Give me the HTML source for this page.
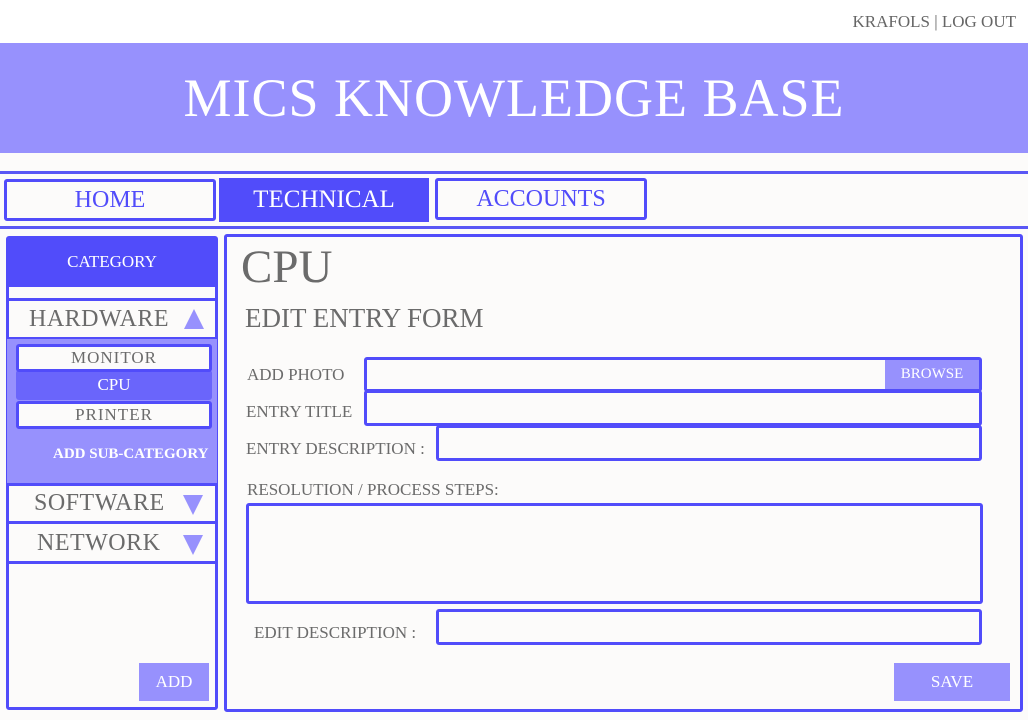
<!DOCTYPE html>
<html><head><meta charset="utf-8"><style>
*{box-sizing:border-box;margin:0;padding:0}
body{width:1028px;height:720px;background:#fcfbfa;font-family:"Liberation Serif",serif;color:#6b6b6b;position:relative;overflow:hidden}
.a{position:absolute}
.b{border:3px solid #514cfa;border-radius:3px;background:#fcfbfa}
.c{display:flex;align-items:center;justify-content:center}
.tri{width:0;height:0;border-left:10px solid transparent;border-right:10px solid transparent}
</style></head><body>
<div class="a" style="left:0;top:0;width:1028px;height:43px;background:#fff"></div>
<div class="a" style="right:12px;top:12px;font-size:17px;color:#666">KRAFOLS | LOG OUT</div>
<div class="a c" style="left:0;top:43px;width:1028px;height:110px;background:#9791fd;color:#fff;font-size:54px;letter-spacing:1px">MICS KNOWLEDGE BASE</div>
<div class="a" style="left:0;top:171px;width:1028px;height:3px;background:#5a57f5"></div>
<div class="a" style="left:0;top:226px;width:1028px;height:3px;background:#5a57f5"></div>
<div class="a b c" style="left:4px;top:179px;width:212px;height:42px;color:#514cfa;font-size:24px">HOME</div>
<div class="a c" style="left:219px;top:178px;width:210px;height:44px;background:#514cfa;color:#fff;font-size:25px">TECHNICAL</div>
<div class="a b c" style="left:435px;top:178px;width:212px;height:42px;color:#514cfa;font-size:24px">ACCOUNTS</div>

<div class="a b" style="left:6px;top:236px;width:212px;height:474px"></div>
<div class="a c" style="left:7px;top:237px;width:210px;height:50px;background:#514cfa;color:#fff;font-size:17px">CATEGORY</div>
<div class="a" style="left:7px;top:298px;width:210px;height:3px;background:#514cfa"></div>
<div class="a" style="left:29px;top:306px;font-size:24px;letter-spacing:0.5px">HARDWARE</div>
<div class="a tri" style="left:184px;top:309px;border-bottom:20px solid #9791fd"></div>
<div class="a" style="left:7px;top:337px;width:210px;height:149px;background:#9791fd;border-top:2px solid #514cfa;border-bottom:3px solid #514cfa"></div>
<div class="a" style="left:16px;top:370px;width:196px;height:30px;background:#6a65fb;border-radius:3px"></div>
<div class="a c" style="left:16px;top:370px;width:196px;height:30px;color:#fff;font-size:17px">CPU</div>
<div class="a b c" style="left:16px;top:344px;width:196px;height:28px;font-size:17px;letter-spacing:1px">MONITOR</div>
<div class="a b c" style="left:16px;top:401px;width:196px;height:28px;font-size:17px;letter-spacing:1px">PRINTER</div>
<div class="a" style="left:53px;top:446px;color:#fff;font-size:15px;font-weight:bold">ADD SUB-CATEGORY</div>
<div class="a" style="left:34px;top:490px;font-size:24px;letter-spacing:0.5px">SOFTWARE</div>
<div class="a tri" style="left:183px;top:495px;border-top:20px solid #9791fd"></div>
<div class="a" style="left:7px;top:521px;width:210px;height:3px;background:#514cfa"></div>
<div class="a" style="left:37px;top:530px;font-size:24px;letter-spacing:0.5px">NETWORK</div>
<div class="a tri" style="left:183px;top:535px;border-top:20px solid #9791fd"></div>
<div class="a" style="left:7px;top:561px;width:210px;height:3px;background:#514cfa"></div>
<div class="a c" style="left:139px;top:663px;width:70px;height:38px;background:#9791fd;color:#fff;font-size:17px">ADD</div>

<div class="a b" style="left:224px;top:234px;width:799px;height:478px"></div>
<div class="a" style="left:241px;top:240px;font-size:47px;color:#6b6b6b">CPU</div>
<div class="a" style="left:245px;top:303px;font-size:27px">EDIT ENTRY FORM</div>
<div class="a" style="left:247px;top:365px;font-size:17px">ADD PHOTO</div>
<div class="a" style="left:246px;top:402px;font-size:17px">ENTRY TITLE</div>
<div class="a" style="left:246px;top:439px;font-size:17px">ENTRY DESCRIPTION :</div>
<div class="a" style="left:247px;top:480px;font-size:17px">RESOLUTION / PROCESS STEPS:</div>
<div class="a" style="left:254px;top:623px;font-size:17px">EDIT DESCRIPTION :</div>
<div class="a b" style="left:364px;top:357px;width:618px;height:35px"></div>
<div class="a c" style="left:885px;top:360px;width:94px;height:29px;background:#9791fd;color:#fff;font-size:15px">BROWSE</div>
<div class="a b" style="left:364px;top:390px;width:618px;height:36px"></div>
<div class="a b" style="left:436px;top:425px;width:546px;height:36px"></div>
<div class="a b" style="left:246px;top:503px;width:737px;height:101px"></div>
<div class="a b" style="left:436px;top:609px;width:546px;height:36px"></div>
<div class="a c" style="left:894px;top:663px;width:116px;height:38px;background:#9791fd;color:#fff;font-size:17px">SAVE</div>
</body></html>
